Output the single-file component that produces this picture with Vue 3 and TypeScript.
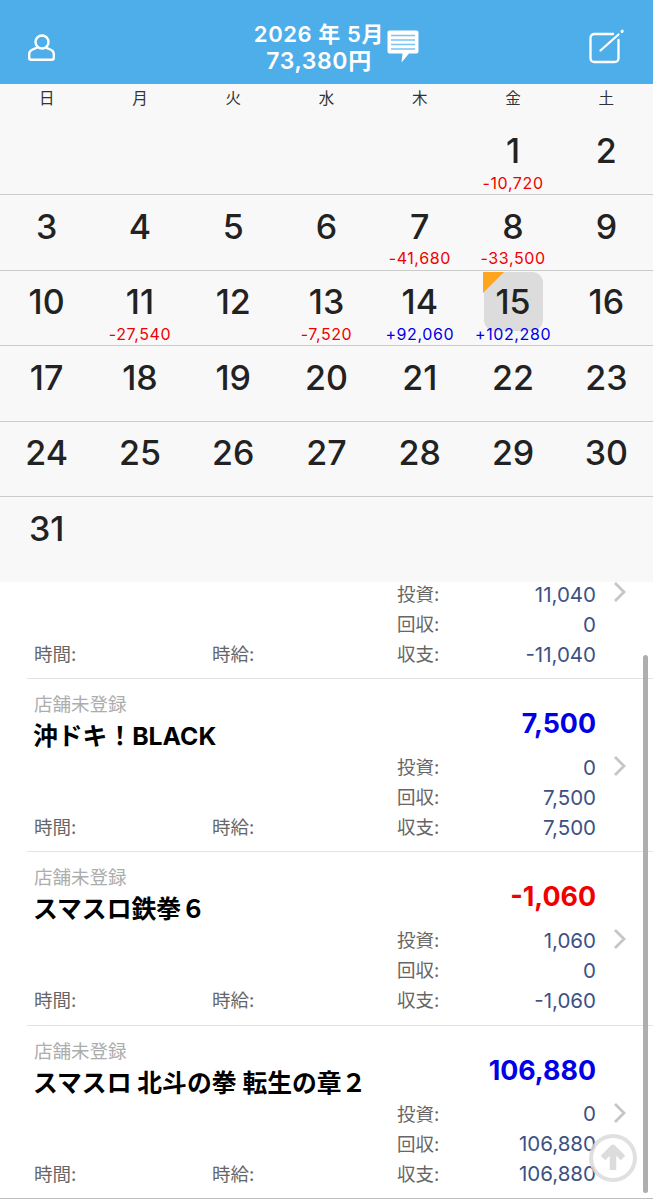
<script setup lang="ts">
interface Day {
  num: number | null
  diff?: number
  today?: boolean
}

interface Entry {
  store: string
  name: string
  amount: number
  invest: number
  back: number
}

const weekdays = ['日', '月', '火', '水', '木', '金', '土']

const diffs: Record<number, number> = {
  1: -10720,
  7: -41680,
  8: -33500,
  11: -27540,
  13: -7520,
  14: 92060,
  15: 102280,
}

// 2026年5月 starts on Friday
const days: Day[] = [
  ...Array.from({ length: 5 }, () => ({ num: null })),
  ...Array.from({ length: 31 }, (_, i) => ({
    num: i + 1,
    diff: diffs[i + 1],
    today: i + 1 === 15,
  })),
]

const weeks: Day[][] = []
for (let i = 0; i < days.length; i += 7) {
  const week = days.slice(i, i + 7)
  while (week.length < 7) week.push({ num: null })
  weeks.push(week)
}

const entries: Entry[] = [
  { store: '店舗未登録', name: '沖ドキ！BLACK', amount: 7500, invest: 0, back: 7500 },
  { store: '店舗未登録', name: 'スマスロ鉄拳６', amount: -1060, invest: 1060, back: 0 },
  { store: '店舗未登録', name: 'スマスロ 北斗の拳 転生の章２', amount: 106880, invest: 0, back: 106880 },
]

const fmt = (n: number) => n.toLocaleString('en-US')
const signed = (n: number) => (n > 0 ? '+' : '') + fmt(n)
</script>

<template>
  <div class="app">
    <header class="top">
      <svg class="top__user" width="27" height="27" viewBox="0 0 27 27" fill="none" stroke="#fff" stroke-width="2.400" stroke-linejoin="round">
        <circle cx="14" cy="8" r="6.500" />
        <path d="M9.500 13.200C7 15.500 1.200 15 1.200 20v3.800c0 1.200.8 2 2 2h20.600c1.200 0 2-.8 2-2V20c0-5-5.800-4.500-8.300-6.800" />
      </svg>
      <div class="top__center">
        <div class="top__title">
          <div>2026 年 5月</div>
          <div class="top__sum">73,380円</div>
        </div>
        <svg class="top__msg" width="32" height="33" viewBox="0 0 32 33">
          <path fill="#fff" d="M2.500 0.500h27c1.200 0 2 .8 2 2v19c0 1.200-.8 2-2 2H22L14.500 32.500 15.500 23.500H2.500c-1.200 0-2-.8-2-2v-19c0-1.200.8-2 2-2z" />
          <path stroke="#7cc2ef" stroke-width="1.300" d="M4 5.500h24M4 10h24M4 14.500h24M4 19h24" />
        </svg>
      </div>
      <svg class="top__edit" width="36" height="36" viewBox="0 0 36 36" fill="none" stroke="#fff" stroke-linecap="round">
        <path stroke-width="2.300" d="M24 6H5.500C3 6 1.500 7.500 1.500 10v20c0 2.500 1.500 4 4 4h20c2.500 0 4-1.500 4-4V12" />
        <path stroke-width="2.300" d="M11.500 22.500L29.500 6.500" />
        <path stroke-width="3" d="M33 3.500l.3-.3" />
      </svg>
    </header>

    <section class="cal">
      <div class="cal__head">
        <div v-for="w in weekdays" :key="w" class="cal__wd">{{ w }}</div>
      </div>
      <div v-for="(week, i) in weeks" :key="i" class="cal__week">
        <div v-for="(d, j) in week" :key="j" class="cal__day">
          <template v-if="d.num">
            <div v-if="d.today" class="cal__today"></div>
            <div class="cal__num">{{ d.num }}</div>
            <div v-if="d.diff" class="cal__diff" :class="d.diff > 0 ? 'is-plus' : 'is-minus'">{{ signed(d.diff) }}</div>
          </template>
        </div>
      </div>
    </section>

    <section class="list">
      <div class="list__inner">
        <div class="entry entry--cut">
          <svg class="entry__chev" width="13" height="22" viewBox="0 0 13 22" fill="none" stroke="#c6c6c6" stroke-width="2.800">
            <path d="M2 2l9 9-9 9" />
          </svg>
          <div class="stats">
            <span></span><span></span><span class="stats__k">投資:</span><span class="stats__v">11,040</span>
            <span></span><span></span><span class="stats__k">回収:</span><span class="stats__v">0</span>
            <span class="stats__k">時間:</span><span class="stats__k">時給:</span><span class="stats__k">収支:</span><span class="stats__v">-11,040</span>
          </div>
        </div>
        <div v-for="e in entries" :key="e.name" class="entry">
          <div class="entry__head">
            <div>
              <div class="entry__store">{{ e.store }}</div>
              <div class="entry__name">{{ e.name }}</div>
            </div>
            <div class="entry__amount" :class="e.amount > 0 ? 'is-plus' : 'is-minus'">{{ fmt(e.amount) }}</div>
          </div>
          <svg class="entry__chev" width="13" height="22" viewBox="0 0 13 22" fill="none" stroke="#c6c6c6" stroke-width="2.800">
            <path d="M2 2l9 9-9 9" />
          </svg>
          <div class="stats">
            <span></span><span></span><span class="stats__k">投資:</span><span class="stats__v">{{ fmt(e.invest) }}</span>
            <span></span><span></span><span class="stats__k">回収:</span><span class="stats__v">{{ fmt(e.back) }}</span>
            <span class="stats__k">時間:</span><span class="stats__k">時給:</span><span class="stats__k">収支:</span><span class="stats__v">{{ fmt(e.amount) }}</span>
          </div>
        </div>
      </div>
      <div class="list__bar"></div>
      <div class="list__up">
        <svg width="30" height="30" viewBox="0 0 30 30" fill="none" stroke="#dcdcdc" stroke-width="6.500" stroke-linejoin="round">
          <path d="M15 27V6M5 15l10-10 10 10" />
        </svg>
      </div>
    </section>
  </div>
</template>

<style>
html,
body {
  margin: 0;
  background: #fff;
}
</style>

<style scoped>
.app {
  width: 653px;
  height: 1199px;
  overflow: hidden;
  display: flex;
  flex-direction: column;
  font-family: Inter, 'Noto Sans CJK JP', sans-serif;
  background: #fff;
}

.top {
  flex: none;
  height: 84px;
  background: #4eaeea;
  display: flex;
  align-items: center;
  padding: 0 28px;
  color: #fff;
}

.top__user {
  flex: none;
  margin-top: 11px;
}

.top__center {
  flex: 1;
  display: flex;
  justify-content: center;
  align-items: center;
  gap: 3px;
  padding-left: 29px;
}

.top__title {
  font-size: 22px;
  font-weight: 600;
  line-height: 27px;
  text-align: center;
  letter-spacing: 0.6px;
  margin-top: 11px;
}

.top__sum {
  font-size: 23px;
}

.top__msg {
  flex: none;
  margin-top: 9px;
}

.top__edit {
  flex: none;
  margin-top: 8px;
}

.cal {
  flex: none;
  height: 498px;
  background: #f8f8f8;
  display: flex;
  flex-direction: column;
}

.cal__head {
  flex: none;
  height: 35.5px;
  display: grid;
  grid-template-columns: repeat(7, 1fr);
}

.cal__wd {
  text-align: center;
  font-size: 15.5px;
  line-height: 30px;
  color: #333;
}

.cal__week {
  flex: none;
  height: 75.5px;
  box-sizing: border-box;
  display: grid;
  grid-template-columns: repeat(7, 1fr);
  border-bottom: 1.5px solid #cbcbcb;
}

.cal__week:last-child {
  border-bottom: 0;
}

.cal__day {
  position: relative;
  text-align: center;
}

.cal__today {
  position: absolute;
  left: 50%;
  top: 1px;
  width: 59px;
  height: 59px;
  margin-left: -29.500px;
  border-radius: 11px;
  background: #dcdcdc;
}

.cal__today::before {
  content: '';
  position: absolute;
  left: -1px;
  top: 0;
  width: 22px;
  height: 22px;
  background: #ffa51f;
  clip-path: polygon(0 0, 100% 0, 0 100%);
}

.cal__num {
  position: relative;
  font-size: 34px;
  font-weight: 500;
  line-height: 40px;
  padding-top: 11.5px;
  color: #222;
}

.cal__diff {
  position: relative;
  font-size: 16px;
  line-height: 18px;
  letter-spacing: 0.6px;
  white-space: nowrap;
  margin: 2.5px -12px 0;
}

.is-plus {
  color: #0000e6;
}

.is-minus {
  color: #f00000;
}

.list {
  flex: 1;
  position: relative;
  overflow: hidden;
}

.list__inner {
  margin-top: -4px;
}

.entry {
  position: relative;
  margin-left: 27px;
  padding: 0 57px 0 7px;
  height: 173.330px;
  box-sizing: border-box;
  border-bottom: 1.500px solid #e2e2e2;
}

.entry:last-child {
  margin-left: 0;
  padding-left: 34px;
  border-bottom-color: #bdbdbd;
}

.entry--cut {
  height: 101px;
}

.entry__head {
  height: 72px;
  box-sizing: border-box;
  padding-top: 13px;
  display: flex;
  justify-content: space-between;
  align-items: flex-start;
}

.entry__store {
  font-size: 18.5px;
  line-height: 24px;
  color: #adadad;
}

.entry__name {
  font-size: 24.8px;
  font-weight: 700;
  line-height: 36px;
  margin: 2px 0 0 -1px;
  color: #000;
}

.entry__amount {
  font-size: 26.8px;
  font-weight: 700;
  line-height: 32px;
  margin-top: 15px;
}

.entry__chev {
  position: absolute;
  right: 27px;
  top: 76px;
}

.entry--cut .entry__chev {
  top: 3px;
}

.stats {
  display: grid;
  grid-template-columns: 178px 185px 1fr auto;
  grid-auto-rows: 30px;
  align-items: center;
  font-size: 20.5px;
}

.stats__k {
  font-size: 18.5px;
  color: #666;
}

.stats__v {
  grid-column: 4;
  padding-top: 2px;
  text-align: right;
  color: #3c5184;
}

.list__bar {
  position: absolute;
  left: 643px;
  top: 73px;
  width: 5px;
  height: 538px;
  border-radius: 3px;
  background: #aeaeae;
}

.list__up {
  position: absolute;
  left: 589px;
  top: 552px;
  width: 48px;
  height: 48px;
  box-sizing: border-box;
  border: 4px solid rgba(214, 214, 214, 0.75);
  border-radius: 50%;
  display: flex;
  align-items: center;
  justify-content: center;
  background: rgba(255, 255, 255, 0.35);
}
</style>
